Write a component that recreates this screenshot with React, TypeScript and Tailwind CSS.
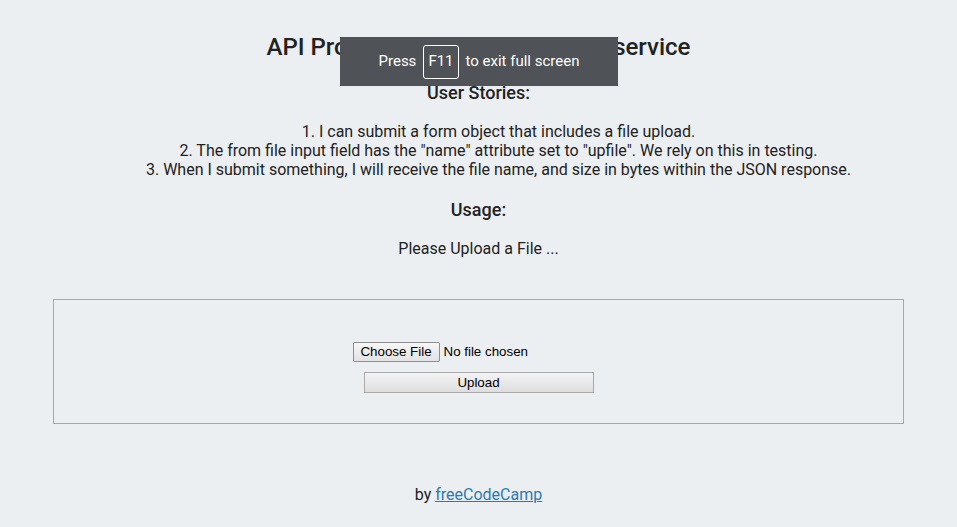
import React from "react";

export default function App() {
  return (
    <div className="relative min-h-[527px] w-full bg-[#eceff1] text-[#222] text-center" style={{ fontFamily: "Roboto, 'Noto Sans', sans-serif" }}>
      <h1 className="pt-[33px] text-[24px] leading-[28px] font-medium">API Project: File Metadata Microservice</h1>
      <h3 className="mt-[21px] text-[18px] leading-[22px] font-medium">User Stories:</h3>
      <ol className="mt-[18px] pl-[40px] text-[16px] leading-[19px]">
        <li>1. I can submit a form object that includes a file upload.</li>
        <li>2. The from file input field has the "name" attribute set to "upfile". We rely on this in testing.</li>
        <li>3. When I submit something, I will receive the file name, and size in bytes within the JSON response.</li>
      </ol>
      <h3 className="mt-[20px] text-[18px] leading-[22px] font-medium">Usage:</h3>
      <p className="mt-[18px] text-[16px] leading-[19px]">Please Upload a File ...</p>
      <div className="mx-[53px] mt-[41px] h-[125px] border border-[#a8a8a8] flex flex-col items-center pt-[42px]" style={{ fontFamily: "'Liberation Sans', Arial, sans-serif" }}>
        <div className="w-[252px] flex items-center text-[13.33px] text-black">
          <span className="h-[20px] w-[87px] flex items-center justify-center rounded-[2px] border border-[#8f8f8f] bg-gradient-to-b from-[#f6f6f6] to-[#e3e3e3]">Choose File</span>
          <span className="ml-[4px]">No file chosen</span>
        </div>
        <button className="mt-[10px] h-[21px] w-[230px] border border-[#a9a9a9] bg-gradient-to-b from-[#f4f4f4] to-[#dedede] text-[13.33px] text-black leading-[19px]" style={{ fontFamily: "'Liberation Sans', Arial, sans-serif" }}>Upload</button>
      </div>
      <p className="mt-[61px] text-[16px] leading-[19px]">by <a href="#" className="text-[#2a7ab0] underline">freeCodeCamp</a></p>

      <div className="absolute left-[340px] top-[37px] w-[278px] h-[49px] bg-[#4f5256] flex items-center justify-center gap-[7px] text-white text-[15px]" style={{ fontFamily: "Roboto, 'Noto Sans', sans-serif" }}>
        <span>Press</span>
        <span className="h-[34px] px-[4px] flex items-center rounded-[3px] border border-white">F11</span>
        <span>to exit full screen</span>
      </div>
    </div>
  );
}
